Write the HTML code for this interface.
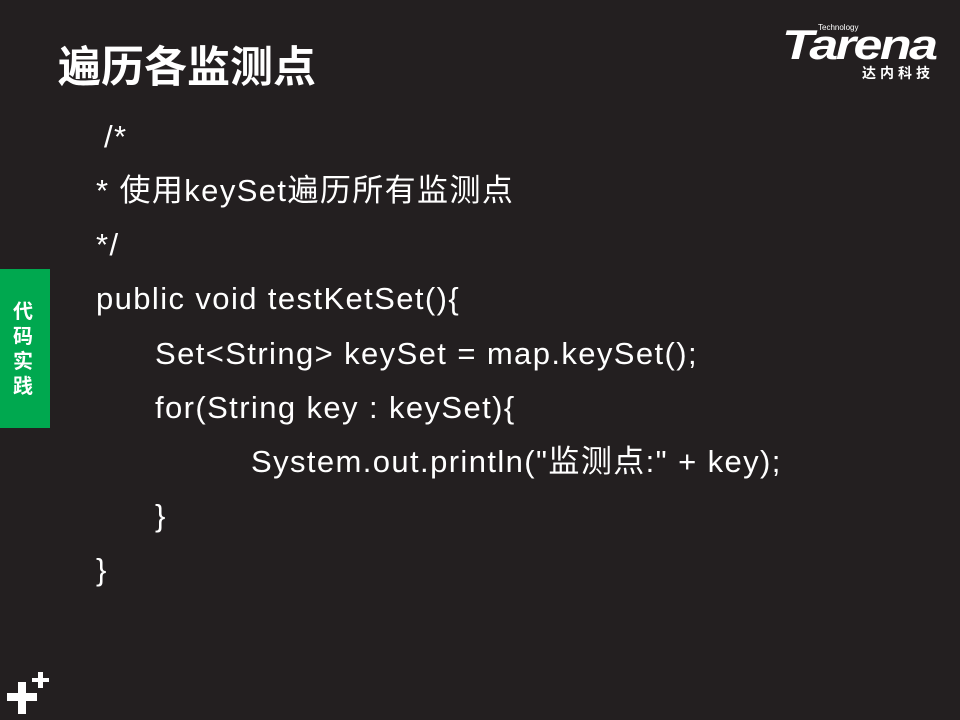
<!DOCTYPE html>
<html><head><meta charset="utf-8"><style>
body{margin:0;width:960px;height:720px;background:#231f20;overflow:hidden;position:relative;font-family:"Liberation Sans","Noto Sans CJK SC",sans-serif;color:#fff}
.t{position:absolute;left:58px;top:36px;font-size:43px;font-weight:bold;font-family:"Noto Sans CJK SC",sans-serif;line-height:56px}
.l{position:absolute;font-size:31px;line-height:36px;white-space:pre;letter-spacing:1.4px}
.g{position:absolute;left:0;top:269px;width:50px;height:159px;background:#00a84f}
.g div{position:absolute;left:13px;top:28px;width:22px;font-size:20px;line-height:25px;font-weight:bold;font-family:"Noto Sans CJK SC",sans-serif}
.p{position:absolute;background:#fff}
</style></head><body>
<div class="t">遍历各监测点</div>
<div style="position:absolute;left:782px;top:20px;width:170px;height:65px">
<div style="position:absolute;left:36px;top:3px;font-size:8px;color:#fff">Technology</div>
<div style="position:absolute;left:0;top:8px;font-size:52px;font-weight:bold;font-style:italic;letter-spacing:-2.5px;line-height:44px;transform:scaleY(0.8);transform-origin:top left">Tarena</div>
<div style="position:absolute;left:80px;top:44px;font-size:14px;font-weight:bold;letter-spacing:4px;font-family:'Noto Sans CJK SC',sans-serif;line-height:18px">达内科技</div>
</div>
<div class="g"><div>代码实践</div></div>
<div class="l" style="left:104px;top:119px">/*</div>
<div class="l" style="left:96px;top:173px">* 使用keySet遍历所有监测点</div>
<div class="l" style="left:96px;top:227px">*/</div>
<div class="l" style="left:96px;top:281px">public void testKetSet(){</div>
<div class="l" style="left:155px;top:336px">Set&lt;String&gt; keySet = map.keySet();</div>
<div class="l" style="left:155px;top:390px">for(String key : keySet){</div>
<div class="l" style="left:251px;top:444px">System.out.println("监测点:" + key);</div>
<div class="l" style="left:155px;top:498px">}</div>
<div class="l" style="left:96px;top:552px">}</div>
<div class="p" style="left:7px;top:693px;width:30px;height:8px"></div>
<div class="p" style="left:18px;top:682px;width:8px;height:32px"></div>
<div class="p" style="left:32px;top:678px;width:17px;height:4px"></div>
<div class="p" style="left:38px;top:672px;width:5px;height:16px"></div>
</body></html>
